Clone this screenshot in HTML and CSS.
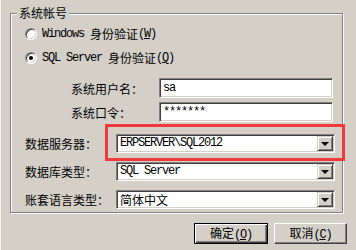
FILE: index.html
```html
<!DOCTYPE html>
<html lang="zh-CN">
<head>
    <meta charset="UTF-8">
    <meta name="viewport" content="width=device-width, initial-scale=1.0">
    <title>系统登录</title>
    <link rel="stylesheet" href="styles.css">
</head>
<body>
    <div class="dialog">
        <div class="group">
            <div class="group-title">系统帐号</div>

            <div class="radio-row">
                <span class="radio"></span>
                <span class="en">Windows </span>身份验证<span class="en">(<u>W</u>)</span>
            </div>
            <div class="radio-row second">
                <span class="radio checked"></span>
                <span class="en">SQL Server </span>身份验证<span class="en">(<u>Q</u>)</span>
            </div>

            <div class="login-row first">
                <span class="login-label">系统用户名：</span>
                <div class="edit"><span class="en">sa</span></div>
            </div>
            <div class="login-row">
                <span class="login-label">系统口令：</span>
                <div class="edit"><span class="en">*******</span></div>
            </div>

            <div class="db-grid">
                <span class="db-label">数据服务器：</span>
                <div class="highlight">
                    <div class="combo">
                        <span class="combo-text en">ERPSERVER\SQL2012</span>
                        <span class="combo-btn"><span class="arrow"></span></span>
                    </div>
                </div>

                <span class="db-label">数据库类型：</span>
                <div class="combo">
                    <span class="combo-text en">SQL Server</span>
                    <span class="combo-btn"><span class="arrow"></span></span>
                </div>

                <span class="db-label">账套语言类型：</span>
                <div class="combo">
                    <span class="combo-text">简体中文</span>
                    <span class="combo-btn"><span class="arrow"></span></span>
                </div>
            </div>
        </div>

        <div class="buttons">
            <button class="btn default">确定<span class="en">(<u>O</u>)</span></button>
            <button class="btn">取消<span class="en">(<u>C</u>)</span></button>
        </div>
    </div>
</body>
</html>
```

FILE: styles.css
```css
body {
    margin: 0;
    background-color: #d4d0c8;
    font-family: "Noto Sans CJK SC", sans-serif;
    font-size: 12px;
    color: #000;
    width: 356px;
    height: 250px;
    overflow: hidden;
}

.dialog {
    height: 250px;
    box-sizing: border-box;
    padding-top: 13px;
    border-left: 1px solid #f4f3ee;
}

.en {
    font-family: "Liberation Mono", monospace;
    letter-spacing: -1.2px;
    white-space: pre;
}

/* group box */
.group {
    margin-left: 9px;
    width: 331px;
    padding-bottom: 3px;
    border: 1px solid #808080;
    box-shadow: inset 1px 1px #fff, 1px 1px #fff;
}

.group-title {
    width: fit-content;
    margin: -8px 0 0 6px;
    padding: 0 2px;
    line-height: 14px;
    background-color: #d4d0c8;
}

.radio-row {
    display: flex;
    align-items: center;
    height: 16px;
    margin: 6px 0 0 14px;
    line-height: 16px;
}

.radio-row.second {
    margin-top: 8px;
}

.radio {
    width: 12px;
    height: 12px;
    box-sizing: border-box;
    margin-right: 5px;
    border: 1px solid;
    border-color: #808080 #fff #fff #808080;
    border-radius: 50%;
    background-color: #fff;
    box-shadow: inset 1px 1px #404040, inset -1px -1px #d4d0c8;
    display: flex;
    justify-content: center;
    align-items: center;
}

.radio.checked::after {
    content: "";
    width: 4px;
    height: 4px;
    border-radius: 50%;
    background-color: #000;
}

/* user / password */
.login-row {
    display: flex;
    align-items: center;
    gap: 16px;
    margin: 4px 0 0 60px;
}

.login-row.first {
    margin-top: 12px;
}

.login-label {
    width: 72px;
    white-space: nowrap;
}

.edit {
    width: 174px;
    height: 20px;
    box-sizing: border-box;
    padding-left: 1px;
    line-height: 16px;
    background-color: #fff;
    border: 1px solid;
    border-color: #808080 #fff #fff #808080;
    box-shadow: inset 1px 1px #404040, inset -1px -1px #d4d0c8;
    display: flex;
    align-items: center;
}

.edit .en {
    margin-left: 2px;
}

/* database */
.db-grid {
    display: grid;
    grid-template-columns: 91px 219px;
    row-gap: 9px;
    align-items: center;
    margin: 12px 0 0 14px;
}

.db-label {
    white-space: nowrap;
}

.highlight {
    margin: -10px -10px -8px -11px;
    padding: 7px 7px 5px 8px;
    border: 3px solid #f23a3a;
}

.combo {
    height: 19px;
    box-sizing: border-box;
    background-color: #fff;
    border: 1px solid;
    border-color: #808080 #fff #fff #808080;
    box-shadow: inset 1px 1px #404040, inset -1px -1px #d4d0c8;
    display: flex;
    align-items: center;
    padding: 1px;
}

.combo-text {
    flex: 1;
    padding-left: 2px;
    line-height: 15px;
    white-space: nowrap;
}

.combo-btn {
    width: 16px;
    height: 15px;
    box-sizing: border-box;
    background-color: #d4d0c8;
    border: 1px solid;
    border-color: #d4d0c8 #404040 #404040 #d4d0c8;
    box-shadow: inset 1px 1px #fff, inset -1px -1px #808080;
    display: flex;
    justify-content: center;
    align-items: center;
}

.arrow {
    width: 0;
    height: 0;
    border-left: 4px solid transparent;
    border-right: 4px solid transparent;
    border-top: 4px solid #000;
    margin-top: 1px;
}

/* buttons */
.buttons {
    display: flex;
    justify-content: flex-end;
    gap: 6px;
    margin-top: 10px;
    padding-right: 9px;
}

.btn {
    width: 73px;
    height: 21px;
    padding: 0;
    font-family: "Noto Sans CJK SC", sans-serif;
    font-size: 12px;
    line-height: 17px;
    color: #000;
    background-color: #d4d0c8;
    border: 1px solid;
    border-color: #fff #404040 #404040 #fff;
    box-shadow: inset -1px -1px #808080, inset 1px 1px #d4d0c8;
}

.btn.default {
    width: 74px;
    border-color: #000;
    box-shadow: inset 1px 1px #fff, inset -1px -1px #404040, inset -2px -2px #808080;
}
```
